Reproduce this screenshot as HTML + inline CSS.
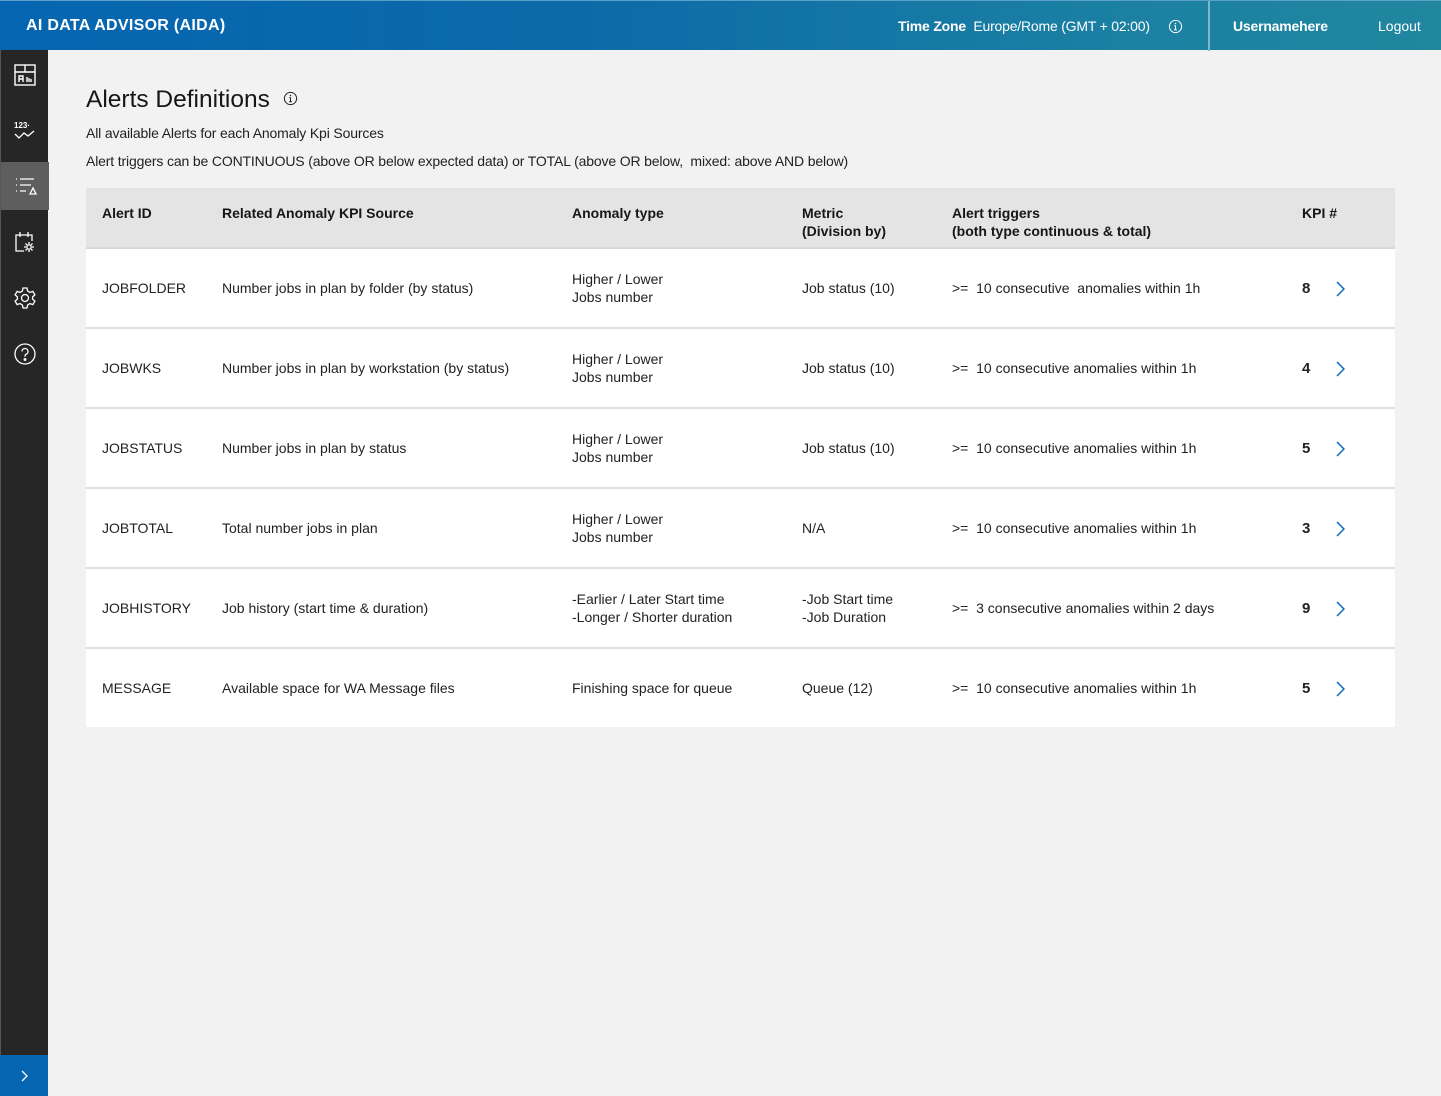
<!DOCTYPE html>
<html><head><meta charset="utf-8"><style>
*{margin:0;padding:0;box-sizing:border-box}
body{width:1441px;height:1096px;background:#f2f2f2;font-family:"Liberation Sans",Arial,sans-serif;color:#161616;position:relative;overflow:hidden}
.hdr{position:absolute;left:0;top:0;width:1441px;height:50px;background:linear-gradient(90deg,#0565b0 0%,#0c6aa8 40%,#1a7fa3 75%,#21879f 100%);color:#fff;border-top:1px solid #5aa0c8}
.hdr .t{position:absolute;left:26px;top:16px;font-weight:bold;font-size:16px;letter-spacing:.3px}
.hdr .tz{position:absolute;left:898px;top:17px;font-size:14px;letter-spacing:-.2px}
.hdr .div{position:absolute;left:1208px;top:0;width:2px;height:50px;background:#7cb6cf}
.hdr .u{position:absolute;left:1233px;top:17px;font-size:14px;font-weight:bold;letter-spacing:-.2px}
.hdr .l{position:absolute;left:1378px;top:17px;font-size:14px}
.side{position:absolute;left:0;top:50px;width:48px;height:1046px;background:#262626;border-left:1px solid #555}
.side .act{position:absolute;left:0;top:112px;width:48px;height:48px;background:#5e5e5e}
.side svg{position:absolute;left:12px}
.exp{position:absolute;left:0;top:1055px;width:48px;height:41px;background:#0565b0}
h1{position:absolute;left:86px;top:86px;font-weight:normal;font-size:24.5px}
.sub{position:absolute;left:86px;font-size:14px;color:#222;letter-spacing:-.15px}
table{position:absolute;left:86px;top:188px;width:1309px;border-collapse:collapse;font-size:14px}
th{background:#e4e4e4;text-align:left;vertical-align:top;font-weight:bold;height:60px;padding:16px 0 0 16px;line-height:18px;border-bottom:2px solid #d8d8d8}
td{background:#fff;height:80px;padding:0 0 0 16px;border-bottom:2px solid #e0e0e0;line-height:18px;color:#222}
tr:last-child td{border-bottom:none;height:79px}
.k{font-weight:bold;font-size:15px}
.ch{display:inline-block;margin-left:25px;vertical-align:middle}
</style></head><body>
<div class="hdr"><div class="t">AI DATA ADVISOR (AIDA)</div>
<div class="tz"><b>Time Zone</b>&nbsp; Europe/Rome (GMT + 02:00) &nbsp;&nbsp;&nbsp;
<svg width="15" height="15" viewBox="0 0 16 16" style="vertical-align:-3px"><circle cx="8" cy="8" r="6.5" fill="none" stroke="#fff" stroke-width="1.1"/><path d="M8 7v4.5M6.5 11.5h3M6.8 7h1.2" stroke="#fff" stroke-width="1.1" fill="none"/><circle cx="8" cy="4.8" r=".8" fill="#fff"/></svg></div>
<div class="div"></div><div class="u">Usernamehere</div><div class="l">Logout</div></div>
<div class="side"><div class="act"></div>
<svg style="top:13px" width="24" height="24" viewBox="0 0 24 24" fill="none" stroke="#fff" stroke-width="1.4"><rect x="2" y="2" width="20" height="20"/><path d="M2 9h20M12 2v7M6 19v-6h4v6M6 16h4M14 19v-5M18 19v-3M16 19v-4"/></svg>
<svg style="top:68px" width="24" height="24" viewBox="0 0 24 24" fill="none" stroke="#fff" stroke-width="1.3"><text x="1" y="10" font-size="8" fill="#fff" stroke="none" font-weight="bold" font-family="Liberation Sans">123·</text><path d="M2 16l4 4 5-5 4 3 6-5"/></svg>
<svg style="top:124px" width="24" height="24" viewBox="0 0 24 24" fill="none" stroke="#fff" stroke-width="1.3"><path d="M3 5h1M7 5h14M3 11h1M7 11h11M3 17h1M7 17h6M17 20l3-6 3 6z"/></svg>
<svg style="top:180px" width="24" height="24" viewBox="0 0 24 24" fill="none" stroke="#fff" stroke-width="1.3"><path d="M11 21H3V5h16v6M7 2v5M15 2v5"/><circle cx="16" cy="17" r="2.2"/><path d="M16 12v2M16 20v2M11 17h2M19 17h2M12.5 13.5l1.4 1.4M18.1 19.1l1.4 1.4M12.5 20.5l1.4-1.4M18.1 14.9l1.4-1.4"/></svg>
<svg style="top:236px" width="24" height="24" viewBox="0 0 24 24" fill="none" stroke="#fff" stroke-width="1.3"><circle cx="12" cy="12" r="3.5"/><path d="M10 2h4l.6 3 2.4 1.4 2.9-1 2 3.5-2.3 2v2.2l2.3 2-2 3.5-2.9-1L14.6 19 14 22h-4l-.6-3L7 17.6l-2.9 1-2-3.5 2.3-2v-2.2l-2.3-2 2-3.5 2.9 1L9.4 5z"/></svg>
<svg style="top:292px" width="24" height="24" viewBox="0 0 24 24" fill="none" stroke="#fff" stroke-width="1.3"><circle cx="12" cy="12" r="10"/><path d="M9 9.5a3 3 0 1 1 4 2.8c-1 .4-1 1.2-1 2.4"/><circle cx="12" cy="17.5" r=".8" fill="#fff"/></svg>
</div>
<div class="exp"><svg style="position:absolute;left:19px;top:15px" width="10" height="12" viewBox="0 0 10 12"><path d="M3 1l5 5-5 5" stroke="#fff" stroke-width="1.3" fill="none"/></svg></div>
<h1>Alerts Definitions &nbsp;<svg width="15" height="15" viewBox="0 0 16 16" style="vertical-align:1px"><circle cx="8" cy="8" r="6.5" fill="none" stroke="#222" stroke-width="1.1"/><path d="M8 7v4.5M6.5 11.5h3M6.8 7h1.2" stroke="#222" stroke-width="1.1" fill="none"/><circle cx="8" cy="4.8" r=".8" fill="#222"/></svg></h1>
<div class="sub" style="top:125px">All available Alerts for each Anomaly Kpi Sources</div>
<div class="sub" style="top:153px">Alert triggers can be CONTINUOUS (above OR below expected data) or TOTAL (above OR below,&nbsp; mixed: above AND below)</div>
<table>
<colgroup><col style="width:120px"><col style="width:350px"><col style="width:230px"><col style="width:150px"><col style="width:350px"><col></colgroup>
<tr><th>Alert ID</th><th>Related Anomaly KPI Source</th><th>Anomaly type</th><th>Metric<br>(Division by)</th><th>Alert triggers<br>(both type continuous &amp; total)</th><th>KPI #</th></tr>
<tr><td>JOBFOLDER</td><td>Number jobs in plan by folder (by status)</td><td>Higher / Lower<br>Jobs number</td><td>Job status (10)</td><td>&gt;=&nbsp; 10 consecutive&nbsp; anomalies within 1h</td><td><span class="k">8</span><svg class="ch" width="10" height="16" viewBox="0 0 10 16"><path d="M2 1l7 7-7 7" stroke="#0a64c0" stroke-width="1.5" fill="none"/></svg></td></tr>
<tr><td>JOBWKS</td><td>Number jobs in plan by workstation (by status)</td><td>Higher / Lower<br>Jobs number</td><td>Job status (10)</td><td>&gt;=&nbsp; 10 consecutive anomalies within 1h</td><td><span class="k">4</span><svg class="ch" width="10" height="16" viewBox="0 0 10 16"><path d="M2 1l7 7-7 7" stroke="#0a64c0" stroke-width="1.5" fill="none"/></svg></td></tr>
<tr><td>JOBSTATUS</td><td>Number jobs in plan by status</td><td>Higher / Lower<br>Jobs number</td><td>Job status (10)</td><td>&gt;=&nbsp; 10 consecutive anomalies within 1h</td><td><span class="k">5</span><svg class="ch" width="10" height="16" viewBox="0 0 10 16"><path d="M2 1l7 7-7 7" stroke="#0a64c0" stroke-width="1.5" fill="none"/></svg></td></tr>
<tr><td>JOBTOTAL</td><td>Total number jobs in plan</td><td>Higher / Lower<br>Jobs number</td><td>N/A</td><td>&gt;=&nbsp; 10 consecutive anomalies within 1h</td><td><span class="k">3</span><svg class="ch" width="10" height="16" viewBox="0 0 10 16"><path d="M2 1l7 7-7 7" stroke="#0a64c0" stroke-width="1.5" fill="none"/></svg></td></tr>
<tr><td>JOBHISTORY</td><td>Job history (start time &amp; duration)</td><td>-Earlier / Later Start time<br>-Longer / Shorter duration</td><td>-Job Start time<br>-Job Duration</td><td>&gt;=&nbsp; 3 consecutive anomalies within 2 days</td><td><span class="k">9</span><svg class="ch" width="10" height="16" viewBox="0 0 10 16"><path d="M2 1l7 7-7 7" stroke="#0a64c0" stroke-width="1.5" fill="none"/></svg></td></tr>
<tr><td>MESSAGE</td><td>Available space for WA Message files</td><td>Finishing space for queue</td><td>Queue (12)</td><td>&gt;=&nbsp; 10 consecutive anomalies within 1h</td><td><span class="k">5</span><svg class="ch" width="10" height="16" viewBox="0 0 10 16"><path d="M2 1l7 7-7 7" stroke="#0a64c0" stroke-width="1.5" fill="none"/></svg></td></tr>
</table>
</body></html>
